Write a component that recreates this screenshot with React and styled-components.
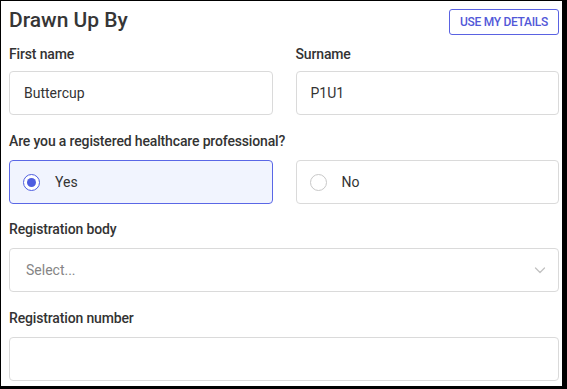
import React from 'react';
import styled, {createGlobalStyle} from 'styled-components';

const GlobalStyle = createGlobalStyle`
	html, body {
		margin: 0;
		padding: 0;
		background: #000;
	}
	body {
		font-family: Roboto, "Liberation Sans", Arial, sans-serif;
	}
	* {
		box-sizing: border-box;
	}
`;

const Panel = styled.div`
	width: 561px;
	height: 385px;
	margin: 1px 0 0 1px;
	padding: 8px 3px 0 8px;
	background: #fff;
	overflow: hidden;
`;

const Header = styled.div`
	display: flex;
	justify-content: space-between;
	align-items: flex-start;
	height: 34px;
`;

const Title = styled.h2`
	margin: -1px 0 0 0;
	font-size: 21px;
	line-height: 24px;
	font-weight: 500;
	color: #363636;
`;

const OutlineButton = styled.button`
	width: 110px;
	height: 26px;
	padding: 0;
	border: 1px solid #5a62e2;
	border-radius: 3px;
	background: #fff;
	color: #5258d8;
	font-family: inherit;
	font-size: 12px;
	font-weight: 500;
	letter-spacing: -0.3px;
	text-transform: uppercase;
`;

const Row = styled.div`
	display: grid;
	grid-template-columns: 1fr 1fr;
	column-gap: 23px;
	margin-top: ${p => p.$top ?? 18}px;
`;

const Field = styled.div`
	margin-top: ${p => p.$top ?? 16}px;
`;

const Label = styled.div`
	font-size: 14px;
	line-height: 20px;
	font-weight: 500;
	letter-spacing: -0.15px;
	color: #333;
	margin-bottom: ${p => p.$gap ?? 9}px;
`;

const Box = styled.div`
	height: 44px;
	display: flex;
	align-items: center;
	padding: 0 14px;
	border: 1px solid #dadada;
	border-radius: 4px;
	background: #fff;
	font-size: 14px;
	color: #333;
`;

const Choice = styled(Box)`
	padding-left: 13px;
	border-color: ${p => p.$checked ? '#5a67e6' : '#dadada'};
	background: ${p => p.$checked ? '#f1f4fe' : '#fff'};
`;

const Radio = styled.span`
	width: 17px;
	height: 17px;
	border-radius: 50%;
	border: 1.5px solid ${p => p.$checked ? '#4e5de0' : '#c8c8c8'};
	background: #fff;
	display: flex;
	align-items: center;
	justify-content: center;
	margin-right: 15px;

	&::after {
		content: '';
		width: 9px;
		height: 9px;
		border-radius: 50%;
		background: ${p => p.$checked ? '#4e5de0' : 'transparent'};
	}
`;

const SelectBox = styled(Box)`
	justify-content: space-between;
	padding-left: 16px;
	padding-right: 11px;
	color: #858585;
`;

const Chevron = () => (
	<svg width="14" height="14" viewBox="0 0 14 14" fill="none">
		<path d="M2.5 5l4.5 4.5L11.5 5" stroke="#c2c2c2" strokeWidth="1.3" strokeLinecap="round" strokeLinejoin="round"/>
	</svg>
);

export default function App() {
	return (
		<>
			<GlobalStyle/>
			<Panel>
				<Header>
					<Title>Drawn Up By</Title>
					<OutlineButton>Use my details</OutlineButton>
				</Header>
				<Row $top={1}>
					<div>
						<Label $gap={7}>First name</Label>
						<Box>Buttercup</Box>
					</div>
					<div>
						<Label $gap={7}>Surname</Label>
						<Box>P1U1</Box>
					</div>
				</Row>
				<Field>
					<Label>Are you a registered healthcare professional?</Label>
					<Row $top={0}>
						<Choice $checked><Radio $checked/>Yes</Choice>
						<Choice><Radio/>No</Choice>
					</Row>
				</Field>
				<Field $top={15}>
					<Label>Registration body</Label>
					<SelectBox>Select...<Chevron/></SelectBox>
				</Field>
				<Field>
					<Label>Registration number</Label>
					<Box/>
				</Field>
			</Panel>
		</>
	);
}
